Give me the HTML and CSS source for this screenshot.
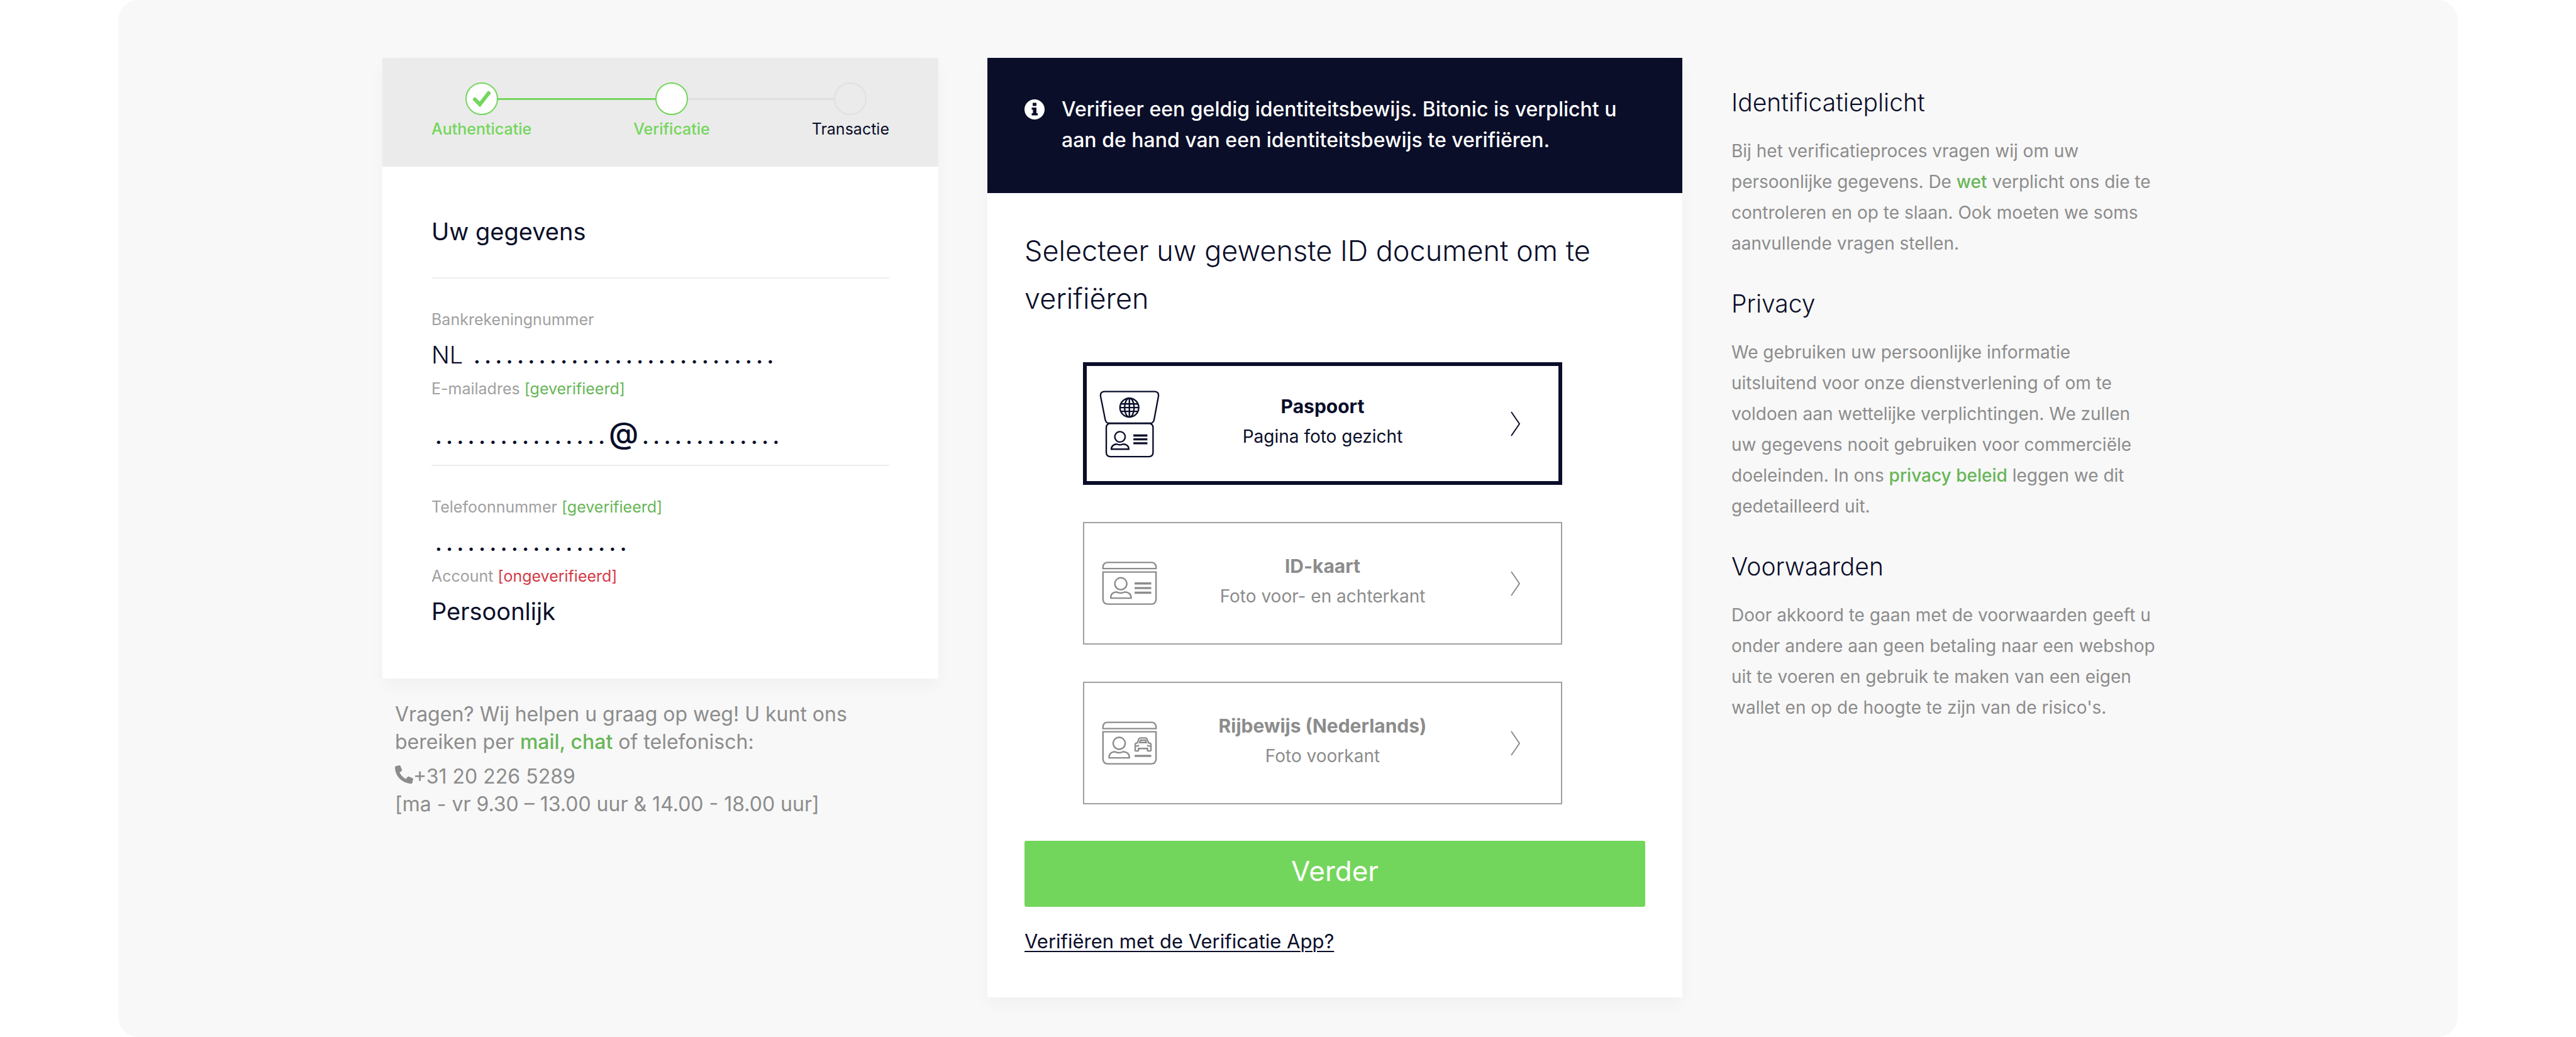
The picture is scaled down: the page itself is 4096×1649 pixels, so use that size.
FILE: index.html
```html
<!DOCTYPE html>
<html lang="nl">
  <head>
    <meta charset="UTF-8" />
    <title>Verificatie</title>
    <link rel="stylesheet" href="styles.css">
  </head>
  <body>
    <main class="panel">
      <section class="account">
        <div class="card">
          <ol class="steps">
            <li class="step done">
              <span class="step-dot">
                <svg class="check" viewBox="0 0 30 28"><path d="M4 15l8 8L26 5" /></svg>
              </span>
              Authenticatie
            </li>
            <li class="step active"><span class="step-dot"></span>Verificatie</li>
            <li class="step"><span class="step-dot"></span>Transactie</li>
          </ol>

          <div class="details">
            <h2>Uw gegevens</h2>
            <hr />
            <div class="field">
              <div class="field-label">Bankrekeningnummer</div>
              <div class="field-value light">NL <span class="dots">. . . . . . . . . . . . . . . . . . . . . . . . . . . .</span></div>
            </div>
            <div class="field email">
              <div class="field-label">E-mailadres <span class="ok">[geverifieerd]</span></div>
              <div class="field-value"><span class="dots">. . . . . . . . . . . . . . . .</span><span class="at">@</span><span class="dots">. . . . . . . . . . . . .</span></div>
            </div>
            <hr />
            <div class="field">
              <div class="field-label">Telefoonnummer <span class="ok">[geverifieerd]</span></div>
              <div class="field-value"><span class="dots">. . . . . . . . . . . . . . . . . .</span></div>
            </div>
            <div class="field">
              <div class="field-label">Account <span class="error">[ongeverifieerd]</span></div>
              <div class="field-value">Persoonlijk</div>
            </div>
          </div>
        </div>

        <div class="contact">
          <p>Vragen? Wij helpen u graag op weg! U kunt ons<br />bereiken per <a href="#">mail, chat</a> of telefonisch:</p>
          <p>
            <svg class="phone" viewBox="0 0 512 512"><path d="M493 25L389 1c-11-3-23 3-27 14l-48 112c-4 10-1 21 7 28l61 50c-36 77-99 140-177 177l-50-61c-7-8-18-11-28-7L15 362c-11 4-17 16-14 27l24 104c2 11 12 19 23 19 256 0 464-207 464-464 0-11-8-21-19-23z" /></svg>+31 20 226 5289<br />[ma - vr 9.30 – 13.00 uur &amp; 14.00 - 18.00 uur]
          </p>
        </div>
      </section>

      <section class="card verify">
        <div class="notice">
          <svg class="info" viewBox="0 0 32 32">
            <circle cx="16" cy="16" r="16" />
            <path d="M13 5.500h6v5h-6zM11.500 13h7.500v9h2v3.500h-9.500V22h2v-5.500h-2z" />
          </svg>
          <p>Verifieer een geldig identiteitsbewijs. Bitonic is verplicht u<br />aan de hand van een identiteitsbewijs te verifiëren.</p>
        </div>

        <div class="verify-body">
          <h1>Selecteer uw gewenste ID document om te verifiëren</h1>

          <div class="options">
            <button type="button" class="option selected">
              <svg class="icon-passport" viewBox="90 88 404 456">
                <path d="M122 99H462Q490 101 486 132L457 288Q452 312 432 312H155Q134 312 129 288L98 132Q94 101 122 99Z" />
                <rect x="136" y="313" width="314" height="223" rx="26" />
                <circle cx="291" cy="207" r="63" />
                <ellipse cx="291" cy="207" rx="32" ry="63" />
                <path d="M291 144V270M232 182H350M228 207H354M232 232H350" />
                <circle cx="228" cy="403" r="35" />
                <path d="M170 486C170 464 188 452 208 452Q228 462 248 452C270 452 287 464 287 486Z" />
                <path class="bars" d="M318 394H412M318 420H412M318 446H412" />
              </svg>
              <span class="option-text"><strong>Paspoort</strong>Pagina foto gezicht</span>
              <svg class="arrow" viewBox="0 0 16 40"><path d="M1 1L14 20L1 39" /></svg>
            </button>

            <button type="button" class="option">
              <svg class="icon-card" viewBox="40 56 368 298">
                <path d="M47 107V94Q51 66 78 66H370Q397 66 401 94V107Z" />
                <path d="M47 130H401V316Q397 344 370 344H78Q51 344 47 316Z" />
                <circle cx="166" cy="208" r="40" />
                <path d="M99 304C97 278 116 261 140 264Q166 276 190 264C216 261 236 278 235 304Z" />
                <path class="bars" d="M258 206H369M258 237H369M258 268H369" />
              </svg>
              <span class="option-text"><strong>ID-kaart</strong>Foto voor- en achterkant</span>
              <svg class="arrow" viewBox="0 0 16 40"><path d="M1 1L14 20L1 39" /></svg>
            </button>

            <button type="button" class="option">
              <svg class="icon-card" viewBox="40 62 368 298">
                <path d="M47 115V100Q51 73 78 73H370Q397 73 401 100V115Z" />
                <path d="M47 136H401V322Q397 350 370 350H78Q51 350 47 322Z" />
                <circle cx="155" cy="213" r="40" />
                <path d="M88 310C86 284 105 267 129 270Q155 282 179 270C205 267 224 284 223 310Z" />
                <path d="M274 214L286 186Q290 177 300 177H327Q337 177 341 186L354 214M292 208L299 192H330L336 208ZM274 214Q262 208 262 222V258Q262 264 268 264H278Q284 264 284 258V248H344V258Q344 264 350 264H360Q367 264 367 258V222Q367 208 354 214M268 232L288 228M361 232L341 228" />
                <path class="bars" d="M258 297H369" />
              </svg>
              <span class="option-text"><strong>Rijbewijs (Nederlands)</strong>Foto voorkant</span>
              <svg class="arrow" viewBox="0 0 16 40"><path d="M1 1L14 20L1 39" /></svg>
            </button>
          </div>

          <button type="submit" class="submit">Verder</button>
          <a class="app-link" href="#">Verifiëren met de Verificatie App?</a>
        </div>
      </section>

      <aside class="info-texts">
        <h3>Identificatieplicht</h3>
        <p>Bij het verificatieproces vragen wij om uw persoonlijke gegevens. De <a href="#">wet</a> verplicht ons die te controleren en op te slaan. Ook moeten we soms aanvullende vragen stellen.</p>
        <h3>Privacy</h3>
        <p>We gebruiken uw persoonlijke informatie uitsluitend voor onze dienstverlening of om te voldoen aan wettelijke verplichtingen. We zullen uw gegevens nooit gebruiken voor commerciële doeleinden. In ons <a href="#">privacy beleid</a> leggen we dit gedetailleerd uit.</p>
        <h3>Voorwaarden</h3>
        <p>Door akkoord te gaan met de voorwaarden geeft u onder andere aan geen betaling naar een webshop uit te voeren en gebruik te maken van een eigen wallet en op de hoogte te zijn van de risico's.</p>
      </aside>
    </main>
  </body>
</html>
```
FILE: styles.css
```css
* {
  box-sizing: border-box;
}
body {
  margin: 0;
  background-color: #fff;
  color: #0a0e29;
  font-family: Inter, "Liberation Sans", sans-serif;
}
h1,
h2,
h3,
p {
  margin: 0;
}
h1,
h3 {
  font-weight: 300;
}
a {
  color: #67b657;
  font-weight: 500;
  text-decoration: none;
}
button {
  font-family: inherit;
  cursor: pointer;
}
svg {
  display: block;
}
.panel {
  display: grid;
  grid-template-columns: 884fr 1105fr 676fr;
  gap: 78px;
  align-items: start;
  min-height: 100vh;
  margin: 0 188px;
  padding: 92px 479px 60px 420px;
  background-color: #f8f8f8;
  border-radius: 32px;
}
.card {
  background-color: #fff;
  box-shadow: 0 12px 24px rgba(0, 0, 0, 0.03);
}

/* stappen */
.steps {
  display: flex;
  justify-content: space-between;
  margin: 0;
  padding: 39px 78px 45px;
  list-style: none;
  background-color: #ebebeb;
}
.step {
  position: relative;
  display: flex;
  flex-direction: column;
  align-items: center;
  gap: 7px;
  font-size: 25px;
  line-height: 30px;
}
.step + .step::before {
  content: "";
  position: absolute;
  top: 25px;
  right: 50%;
  width: 290px;
  height: 3px;
  background-color: #e0e0e0;
}
.step.active::before {
  background-color: #73d65c;
}
.step-dot {
  position: relative;
  z-index: 1;
  display: flex;
  align-items: center;
  justify-content: center;
  width: 52px;
  height: 52px;
  border: 2px solid #e0e0e0;
  border-radius: 50%;
  background-color: #ebebeb;
}
.done,
.active {
  color: #73d65c;
  font-weight: 500;
}
.done .step-dot,
.active .step-dot {
  border-color: #73d65c;
  background-color: #fff;
}
.check {
  width: 30px;
  height: 28px;
  fill: none;
  stroke: #73d65c;
  stroke-width: 6;
  stroke-linecap: round;
}

/* gegevens */
.details {
  padding: 80px 78px 68px;
}
.details h2 {
  font-size: 38px;
  font-weight: 400;
  line-height: 46px;
}
.details hr {
  height: 2px;
  margin: 50px 0;
  border: none;
  background-color: #eee;
}
.field {
  margin-bottom: 16px;
}
.field-label {
  margin-bottom: 18px;
  color: #a0a0a0;
  font-size: 25px;
  line-height: 30px;
}
.field-value {
  font-size: 38px;
  line-height: 46px;
}
.field-value.light {
  font-weight: 300;
}
.email .field-label {
  margin-bottom: 32px;
}
.email + hr {
  margin-top: 24px;
}
.dots {
  margin-left: 6px;
  font-size: 32px;
  font-weight: 700;
  line-height: 1;
}
.at {
  margin-left: 6px;
  font-size: 48px;
  font-weight: 500;
  line-height: 1;
}
.ok {
  color: #67b657;
}
.error {
  color: #d43a47;
}
.contact {
  padding: 35px 20px;
  color: #8c8c8c;
  font-size: 32px;
  line-height: 44px;
}
.contact p + p {
  margin-top: 11px;
}
.phone {
  display: inline-block;
  width: 29px;
  height: 29px;
  fill: #8c8c8c;
  transform: scaleX(-1);
}

/* verificatie */
.notice {
  display: flex;
  gap: 27px;
  padding: 57px 59px 60px;
  background-color: #0a0e29;
  color: #fff;
  font-size: 32px;
  font-weight: 500;
  line-height: 49px;
}
.info {
  flex: none;
  width: 32px;
  height: 32px;
  margin-top: 9px;
  fill: #fff;
}
.info path {
  fill: #0a0e29;
}
.verify-body {
  padding: 54px 59px 70px;
}
h1 {
  font-size: 45px;
  line-height: 76px;
}
.options {
  display: grid;
  gap: 59px;
  margin: 63px 132px 58px 93px;
}
.option {
  display: grid;
  grid-template-columns: 96px 1fr 96px;
  align-items: center;
  justify-items: center;
  height: 195px;
  padding: 0 24px;
  border: 2px solid #a0a0a0;
  background-color: #fff;
  color: #8c8c8c;
  font-size: 28px;
  line-height: 48px;
}
.option.selected {
  padding: 0 20px;
  border: 6px solid #0a0e29;
  color: #0a0e29;
}
.option svg {
  fill: none;
  stroke: currentColor;
  stroke-width: 10;
}
.option .bars {
  stroke-width: 14;
}
.option-text {
  padding-bottom: 7px;
}
.option strong {
  display: block;
  font-size: 30px;
}
.icon-passport {
  width: 96px;
  height: 108px;
}
.icon-card {
  width: 88px;
  height: 71px;
}
.option .arrow {
  width: 16px;
  height: 40px;
  stroke-width: 2;
}
.submit {
  display: block;
  width: 100%;
  height: 105px;
  margin-bottom: 36px;
  padding: 0 0 9px;
  border: none;
  border-radius: 3px;
  background-color: #73d65c;
  color: #fff;
  font-size: 44px;
}
.app-link {
  color: #0a0e29;
  font-size: 31px;
  font-weight: 400;
  line-height: 38px;
  text-decoration: underline;
  text-decoration-thickness: 2px;
  text-underline-offset: 4px;
}

/* uitleg */
.info-texts {
  padding-top: 47px;
}
.info-texts h3 {
  margin-bottom: 29px;
  font-size: 39px;
  line-height: 48px;
}
.info-texts p {
  margin-bottom: 47px;
  color: #8c8c8c;
  font-size: 28px;
  line-height: 49px;
}
```
